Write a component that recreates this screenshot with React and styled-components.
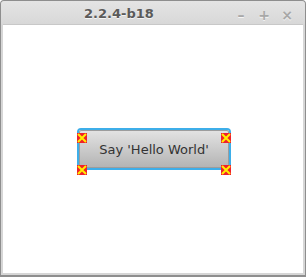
import styled, { createGlobalStyle } from "styled-components";

const Global = createGlobalStyle`
  html, body { margin: 0; padding: 0; background: #fff; }
  body { font-family: "DejaVu Sans", sans-serif; }
`;

const Frame = styled.div`
  width: 306px;
  height: 277px;
  box-sizing: border-box;
  display: flex;
  flex-direction: column;
  background: #d6d6d6;
  border: 1px solid #8e8e8e;
  border-bottom-width: 2px;
  border-radius: 4px 4px 0 0;
  padding: 0 2px 2px 2px;
`;

const TitleBar = styled.div`
  height: 23px;
  flex: none;
  display: flex;
  align-items: center;
  position: relative;
  background: linear-gradient(#e4e4e4, #d8d8d8);
  margin: 0 -2px;
  padding: 0 2px;
  border-radius: 4px 4px 0 0;
`;

const Title = styled.div`
  position: absolute;
  left: 83px;
  top: 5px;
  font-size: 13px;
  font-weight: bold;
  color: #5a5a5a;
  text-shadow: 0 1px 0 #f4f4f4;
`;

const Controls = styled.div`
  margin-left: auto;
  display: flex;
  gap: 9px;
  padding-right: 9px;
  padding-top: 5px;
`;

const Ctl = styled.span`
  width: 14px;
  text-align: center;
  font-size: 14px;
  font-weight: bold;
  color: #a8a8a8;
  text-shadow: 0 1px 0 #f4f4f4;
`;

const Content = styled.div`
  flex: 1;
  background: #fff;
  border-top: 1px solid #c8c8c8;
  display: flex;
  align-items: center;
  justify-content: center;
  padding-left: 2px;
`;

const Focus = styled.div`
  position: relative;
  border: 2px solid #3daee9;
  border-radius: 4px;
`;

const Button = styled.button`
  display: block;
  width: 150px;
  height: 38px;
  border: 1px solid #9c9c9c;
  border-radius: 2px;
  background: linear-gradient(#e2e2e2, #b4b4b4);
  font-family: "DejaVu Sans", sans-serif;
  font-size: 13px;
  color: #333;
  padding: 0;
`;

const Marker = styled.span`
  position: absolute;
  width: 10px;
  height: 10px;
  ${(p) => (p.$top ? "top: -2px;" : "bottom: -2px;")}
  ${(p) => (p.$left ? "left: -2px;" : "right: -2px;")}
`;

const Mark = ({ top, left }) => (
  <Marker $top={top} $left={left}>
    <svg width="10" height="10" viewBox="0 0 10 10">
      <rect width="10" height="10" fill="#f0202a" />
      <path d="M1 1L9 9M9 1L1 9" stroke="#ffee00" strokeWidth="2" />
    </svg>
  </Marker>
);

export default function App() {
  return (
    <>
      <Global />
      <Frame>
        <TitleBar>
          <Title>2.2.4-b18</Title>
          <Controls>
            <Ctl>–</Ctl>
            <Ctl>+</Ctl>
            <Ctl>×</Ctl>
          </Controls>
        </TitleBar>
        <Content>
          <Focus>
            <Button>Say 'Hello World'</Button>
            <Mark top left />
            <Mark top />
            <Mark left />
            <Mark />
          </Focus>
        </Content>
      </Frame>
    </>
  );
}
